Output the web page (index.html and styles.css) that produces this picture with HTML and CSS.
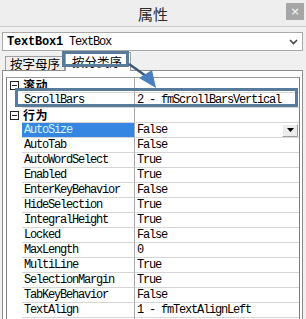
FILE: index.html
```html
<!DOCTYPE html>
<html lang="zh">
<head>
  <meta charset="UTF-8">
  <title>属性</title>
  <link rel="stylesheet" href="styles.css">
</head>
<body>

  <div class="titlebar">
    <span></span>
    <span class="title">属性</span>
    <span class="close">×</span>
  </div>

  <div class="main">
    <div class="combo">
      <b>TextBox1</b>TextBox
      <svg class="chev" width="9" height="6" viewBox="0 0 9 6"><path d="M1 1 L4.5 4.5 L8 1" fill="none" stroke="#444" stroke-width="1.6"/></svg>
    </div>

    <div class="tabs">
      <div class="tab">按字母序</div>
      <div class="tab active">按分类序</div>
    </div>

    <div class="page">
      <div class="grid">
        <div class="row cat"><div class="margin"><span class="minus"></span></div><div class="name">滚动</div><div class="val"></div></div>
        <div class="row"><div class="margin"></div><div class="name">ScrollBars</div><div class="val">2 - fmScrollBarsVertical</div></div>
        <div class="row cat"><div class="margin"><span class="minus"></span></div><div class="name">行为</div><div class="val"></div></div>
        <div class="row sel">
          <div class="margin"></div><div class="name">AutoSize</div>
          <div class="val">False<span class="drop"><svg width="7" height="4" viewBox="0 0 7 4"><path d="M0 0 H7 L3.5 4 Z" fill="#000"/></svg></span></div>
        </div>
        <div class="row"><div class="margin"></div><div class="name">AutoTab</div><div class="val">False</div></div>
        <div class="row"><div class="margin"></div><div class="name">AutoWordSelect</div><div class="val">True</div></div>
        <div class="row"><div class="margin"></div><div class="name">Enabled</div><div class="val">True</div></div>
        <div class="row"><div class="margin"></div><div class="name">EnterKeyBehavior</div><div class="val">False</div></div>
        <div class="row"><div class="margin"></div><div class="name">HideSelection</div><div class="val">True</div></div>
        <div class="row"><div class="margin"></div><div class="name">IntegralHeight</div><div class="val">True</div></div>
        <div class="row"><div class="margin"></div><div class="name">Locked</div><div class="val">False</div></div>
        <div class="row"><div class="margin"></div><div class="name">MaxLength</div><div class="val">0</div></div>
        <div class="row"><div class="margin"></div><div class="name">MultiLine</div><div class="val">True</div></div>
        <div class="row"><div class="margin"></div><div class="name">SelectionMargin</div><div class="val">True</div></div>
        <div class="row"><div class="margin"></div><div class="name">TabKeyBehavior</div><div class="val">False</div></div>
        <div class="row"><div class="margin"></div><div class="name">TextAlign</div><div class="val">1 - fmTextAlignLeft</div></div>
        <div class="row"><div class="margin"></div><div class="name"></div><div class="val"></div></div>
      </div>
    </div>
  </div>

  <!-- annotation drawn over the screenshot -->
  <div class="mark mark-tab"></div>
  <div class="mark mark-row"></div>
  <svg class="arrow" width="45" height="40" viewBox="0 0 45 40">
    <path d="M9 9 L26 21" stroke="#3f5878" stroke-width="2.5" fill="none"/>
    <path d="M19 23 L32 15 L36 33 Z" fill="#4a7fbf"/>
  </svg>

</body>
</html>
```

FILE: styles.css
```css
* { box-sizing: border-box; margin: 0; padding: 0; }
body {
  width: 306px;
  height: 319px;
  overflow: hidden;
  background: #f0f0f0;
  font-family: "Liberation Mono", monospace;
  font-size: 12px;
  letter-spacing: -1.2px;
  color: #000;
  position: relative;
}
.titlebar {
  height: 27px;
  background: #eeeeee;
  border-bottom: 1px solid #c9c9c9;
  display: grid;
  grid-template-columns: 1fr auto 1fr;
  align-items: center;
}
.title {
  font-family: "Noto Sans CJK SC", sans-serif;
  font-size: 15px;
  letter-spacing: 0;
  color: #2b2b2b;
}
.close {
  justify-self: end;
  align-self: start;
  margin: 3px 2px 0 0;
  width: 18px;
  height: 17px;
  background: #a6a6a6;
  color: #fff;
  font-family: "DejaVu Sans", sans-serif;
  font-size: 11px;
  letter-spacing: 0;
  display: flex;
  justify-content: center;
  align-items: center;
}
.main {
  padding: 5px 3px 0 2px;
}
.combo {
  height: 19px;
  background: #fff;
  border: 1px solid #a9a9a9;
  display: flex;
  align-items: center;
  padding-left: 4px;
}
.combo b {
  letter-spacing: -0.2px;
  margin-right: 6px;
}
.chev {
  margin-left: auto;
  margin-right: 4px;
}
.tabs {
  height: 19px;
  display: flex;
  align-items: flex-end;
  padding-left: 3px;
}
.tab {
  font-family: "Noto Sans CJK SC", sans-serif;
  font-size: 12.5px;
  letter-spacing: 0;
  height: 14px;
  line-height: 14px;
  padding: 0 4px;
  background: #f0f0f0;
  border: 1px solid #a0a0a0;
  border-bottom: none;
}
.tab.active {
  height: 19px;
  line-height: 17px;
  width: 66px;
  background: #fff;
  padding-left: 6px;
  margin-bottom: -1px;
  position: relative;
}
.page {
  height: 260px;
  border: 1px solid #8c8c8c;
  border-bottom: none;
  background: #fff;
  padding: 6px 2px 0 3px;
}
.grid {
  border-left: 1px solid #7d7d7d;
  border-right: 1px solid #7d7d7d;
  border-top: 1px solid #9a9a9a;
}
.row {
  display: grid;
  grid-template-columns: 15px 113px 1fr;
  height: 15px;
  line-height: 14px;
}
.name, .val {
  border-bottom: 1px solid #d6d6d6;
  padding-left: 2px;
  white-space: nowrap;
  overflow: hidden;
}
.name {
  border-right: 1px solid #a8a8a8;
}
.margin {
  display: flex;
  align-items: center;
  justify-content: center;
}
.minus {
  width: 9px;
  height: 9px;
  border: 1px solid #222;
  position: relative;
}
.minus::after {
  content: "";
  position: absolute;
  left: 1px;
  right: 1px;
  top: 3px;
  height: 1px;
  background: #222;
}
.cat .name {
  font-family: "Noto Sans CJK SC", sans-serif;
  font-weight: 700;
  font-size: 12px;
  letter-spacing: 0.5px;
  line-height: 14px;
  padding-left: 1px;
  overflow: visible;
}
.sel .name {
  background: #3586e2;
  color: #d2f6ff;
}
.sel .val {
  display: flex;
  align-items: center;
}
.drop {
  margin-left: auto;
  margin-right: 1px;
  width: 16px;
  height: 13px;
  background: #ececec;
  border: 1px solid #9f9f9f;
  border-top-color: #fff;
  border-left-color: #fff;
  display: flex;
  justify-content: center;
  align-items: center;
}
.mark {
  position: absolute;
  border: 3px solid #587b9c;
}
.mark-tab {
  left: 62px;
  top: 51px;
  width: 67px;
  height: 16px;
}
.mark-row {
  left: 15px;
  top: 88px;
  width: 283px;
  height: 19px;
}
.arrow {
  position: absolute;
  left: 120px;
  top: 55px;
}
```
